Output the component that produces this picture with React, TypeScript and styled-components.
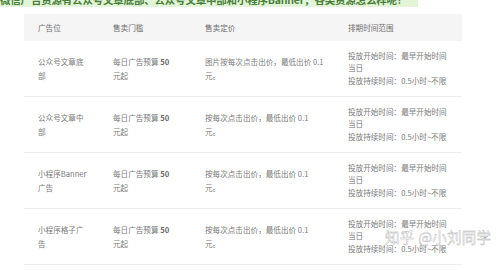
import React from 'react';
import styled, { createGlobalStyle } from 'styled-components';

const ROWS = [
  {
    position: '公众号文章底部',
    price: '图片按每次点击出价，最低出价 0.1 元。',
  },
  {
    position: '公众号文章中部',
    price: '按每次点击出价，最低出价 0.1 元。',
  },
  {
    position: '小程序Banner广告',
    price: '按每次点击出价，最低出价 0.1 元。',
  },
  {
    position: '小程序格子广告',
    price: '按每次点击出价，最低出价 0.1 元。',
  },
];

const GlobalStyle = createGlobalStyle`
  html, body {
    margin: 0;
    padding: 0;
    background: #fff;
  }
  body {
    font-family: "Noto Sans CJK SC", "Liberation Sans", sans-serif;
    overflow: hidden;
  }
`;

const App = () => {
  return (
    <>
      <GlobalStyle />
      <Page>
        <Highlight>
          <span>
            微信广告资源有公众号文章底部、公众号文章中部和小程序Banner，各类资源怎么样呢？
          </span>
        </Highlight>
        <Table>
          <HeadRow>
            <Cell>广告位</Cell>
            <Cell>售卖门槛</Cell>
            <Cell>售卖定价</Cell>
            <Cell>排期时间范围</Cell>
          </HeadRow>
          {ROWS.map((row, idx) => (
            <BodyRow key={`row-${idx}`}>
              <Cell>{row.position}</Cell>
              <Cell $right={18}>
                每日广告预算 <b>50</b> 元起
              </Cell>
              <Cell>{row.price}</Cell>
              <Cell $tight>
                投放开始时间：最早开始时间当日
                <br />
                投放持续时间：0.5小时~不限
              </Cell>
            </BodyRow>
          ))}
        </Table>
        <Watermark>知乎 @小刘同学</Watermark>
      </Page>
    </>
  );
};

export default App;

const Page = styled.div`
  position: relative;
  width: 500px;
  height: 270px;
  overflow: hidden;
`;

const Highlight = styled.div`
  width: 418px;
  height: 7px;
  overflow: hidden;
  font-size: 10.5px;
  line-height: 14px;
  white-space: nowrap;

  span {
    display: block;
    margin-top: -7px;
    background: #e3f5d8;
    color: #4a7f38;
    font-weight: 700;
    letter-spacing: -0.2px;
  }
`;

const Table = styled.div`
  margin: 7px 0 0 24px;
  width: 438px;
  font-size: 7.6px;
  color: #7a7a7a;
`;

const Row = styled.div`
  display: grid;
  grid-template-columns: 75px 92px 143px 128px;
  align-items: center;
`;

const HeadRow = styled(Row)`
  height: 27px;
  background: #f5f5f5;
  color: #6e6e6e;
`;

const BodyRow = styled(Row)`
  height: 55px;
  border-bottom: 1px solid #ededed;
`;

const Cell = styled.div<{ $tight?: boolean; $right?: number }>`
  padding: 0 ${(p) => p.$right ?? 10}px 0 14px;
  line-height: ${(p) => (p.$tight ? '12.6px' : '14px')};

  b {
    font-weight: 700;
    color: #666;
  }
`;

const Watermark = styled.div`
  position: absolute;
  left: 385px;
  top: 226px;
  font-size: 14.5px;
  letter-spacing: 0.3px;
  color: rgba(255, 255, 255, 0.85);
  -webkit-text-stroke: 0.4px #b0b0b0;
  white-space: nowrap;
`;
